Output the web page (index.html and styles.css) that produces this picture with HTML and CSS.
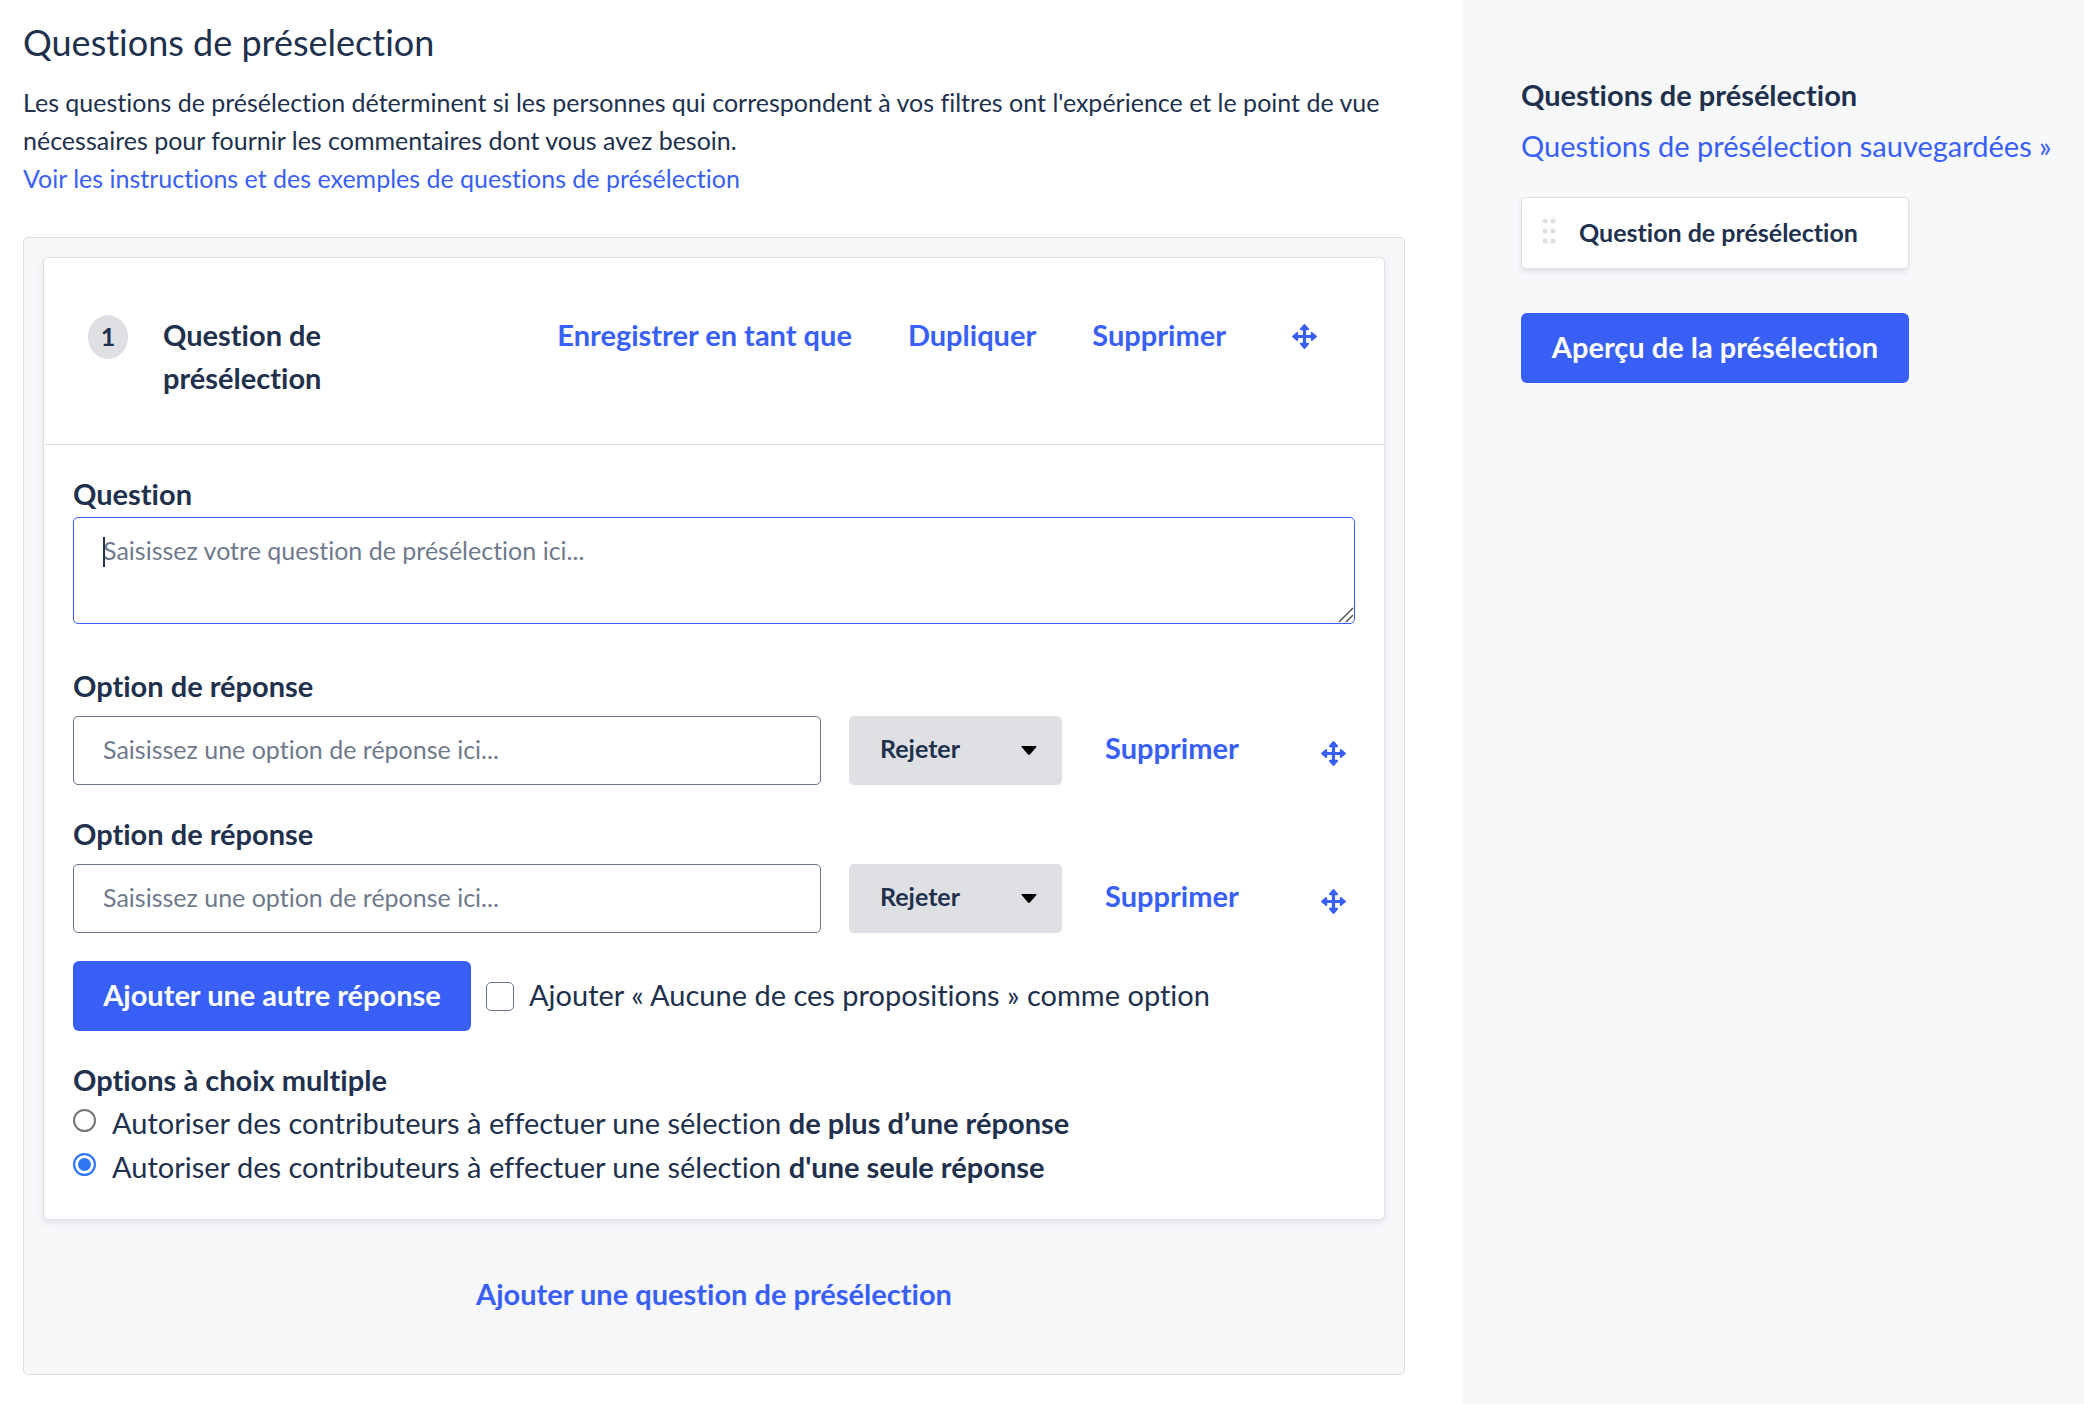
FILE: index.html
```html
<!DOCTYPE html>
<html lang="fr">

<head>
    <meta charset="UTF-8">
    <meta name="viewport" content="width=device-width, initial-scale=1.0">
    <title>Questions de préselection</title>
    <link rel="stylesheet" href="styles.css">
</head>

<body>
    <!-- shared icons -->
    <svg class="sprite" aria-hidden="true">
        <symbol id="icon-move" viewBox="0 0 25 25">
            <path d="M11.400 .7q1.100-1.200 2.200 0l3.200 3.900q.8 1.400-.8 1.600h-1.900v4.700h4.700V9q.2-1.600 1.600-.8l3.900 3.200q1.200 1.100 0 2.200l-3.900 3.200q-1.400.8-1.600-.8v-1.900h-4.700v4.700H16q1.600.2.8 1.600l-3.200 3.900q-1.100 1.200-2.200 0l-3.200-3.900q-.8-1.400.8-1.600h1.900v-4.700H6.200V16q-.2 1.600-1.600.8L.7 13.600q-1.200-1.100 0-2.200l3.900-3.200q1.400-.8 1.600.8v1.900h4.700V6.200H9q-1.600-.2-.8-1.600z" />
        </symbol>
        <symbol id="icon-caret" viewBox="0 0 16 9">
            <path d="M1 0h14q1 0 .4 1L9 8.400q-1 .9-2 0L.6 1Q0 0 1 0z" />
        </symbol>
    </svg>

    <div class="page">
        <main class="content">
            <h1>Questions de préselection</h1>
            <p class="intro">Les questions de présélection déterminent si les personnes qui correspondent à vos filtres ont l'expérience et le point de vue nécessaires pour fournir les commentaires dont vous avez besoin.</p>
            <a class="help-link" href="#">Voir les instructions et des exemples de questions de présélection</a>

            <div class="panel">
                <section class="card">
                    <header class="card-header">
                        <span class="number">1</span>
                        <h2>Question de présélection</h2>
                        <div class="actions">
                            <button type="button" class="link-button">Enregistrer en tant que</button>
                            <button type="button" class="link-button">Dupliquer</button>
                            <button type="button" class="link-button">Supprimer</button>
                            <button type="button" class="move" aria-label="Déplacer"><svg><use href="#icon-move" /></svg></button>
                        </div>
                    </header>

                    <form class="card-body">
                        <label class="label" for="question">Question</label>
                        <div class="question-field">
                            <textarea id="question" placeholder="Saisissez votre question de présélection ici..."></textarea>
                            <svg class="grip" viewBox="0 0 16 16">
                                <path d="M1 15 15 1M8 15l7-7" />
                            </svg>
                        </div>

                        <label class="label answer-label" for="answer-1">Option de réponse</label>
                        <div class="answer">
                            <input type="text" id="answer-1" placeholder="Saisissez une option de réponse ici...">
                            <div class="select">
                                <select aria-label="Action pour la réponse 1">
                                    <option>Rejeter</option>
                                </select>
                                <svg><use href="#icon-caret" /></svg>
                            </div>
                            <button type="button" class="link-button">Supprimer</button>
                            <button type="button" class="move" aria-label="Déplacer"><svg><use href="#icon-move" /></svg></button>
                        </div>

                        <label class="label answer-label" for="answer-2">Option de réponse</label>
                        <div class="answer">
                            <input type="text" id="answer-2" placeholder="Saisissez une option de réponse ici...">
                            <div class="select">
                                <select aria-label="Action pour la réponse 2">
                                    <option>Rejeter</option>
                                </select>
                                <svg><use href="#icon-caret" /></svg>
                            </div>
                            <button type="button" class="link-button">Supprimer</button>
                            <button type="button" class="move" aria-label="Déplacer"><svg><use href="#icon-move" /></svg></button>
                        </div>

                        <div class="add-row">
                            <button type="button" class="button">Ajouter une autre réponse</button>
                            <input type="checkbox" id="none">
                            <label for="none">Ajouter « Aucune de ces propositions » comme option</label>
                        </div>

                        <fieldset class="choices">
                            <legend class="label">Options à choix multiple</legend>
                            <div class="choice">
                                <input type="radio" name="choice" id="many">
                                <label for="many">Autoriser des contributeurs à effectuer une sélection <b>de plus d’une réponse</b></label>
                            </div>
                            <div class="choice">
                                <input type="radio" name="choice" id="single" checked>
                                <label for="single">Autoriser des contributeurs à effectuer une sélection <b>d'une seule réponse</b></label>
                            </div>
                        </fieldset>
                    </form>
                </section>

                <button type="button" class="link-button add-question">Ajouter une question de présélection</button>
            </div>
        </main>

        <aside class="sidebar">
            <h2>Questions de présélection</h2>
            <a href="#">Questions de présélection sauvegardées »</a>
            <div class="sidebar-tools">
                <div class="draggable">
                    <svg viewBox="0 0 14 26">
                        <circle cx="3" cy="3" r="2.500" />
                        <circle cx="11" cy="3" r="2.500" />
                        <circle cx="3" cy="13" r="2.500" />
                        <circle cx="11" cy="13" r="2.500" />
                        <circle cx="3" cy="23" r="2.500" />
                        <circle cx="11" cy="23" r="2.500" />
                    </svg>
                    Question de présélection
                </div>
                <button type="button" class="button">Aperçu de la présélection</button>
            </div>
        </aside>
    </div>
</body>

</html>
```
FILE: styles.css
```css
* {
    box-sizing: border-box;
}

body {
    margin: 0;
    background-color: #fff;
    color: #21314d;
    font-family: Lato, 'Open Sans', sans-serif;
    font-size: 29px;
    font-variant-ligatures: none;
    line-height: 43px;
}

button,
input,
select,
textarea {
    margin: 0;
    color: inherit;
    font: inherit;
    font-variant-ligatures: none;
}

button {
    cursor: pointer;
}

h1,
h2,
p {
    margin: 0;
}

a {
    color: #3960f6;
    text-decoration: none;
}

a:hover {
    text-decoration: underline;
}

.sprite {
    display: none;
}

.page {
    display: grid;
    grid-template-columns: minmax(0, 1fr) 621px;
    min-height: 100vh;
}

.content {
    padding: 21px 58px 29px 23px;
}

h1 {
    margin-bottom: 19px;
    font-size: 36px;
    font-weight: 400;
}

.intro,
.help-link {
    font-size: 25px;
    line-height: 38px;
}

.help-link {
    display: block;
}

/* question builder */

.panel {
    margin-top: 40px;
    padding: 19px 19px 59px;
    border: 1px solid #dfe0e4;
    border-radius: 5px;
    background-color: #f7f8fa;
    text-align: center;
}

.card {
    border: 1px solid #dfe0e4;
    border-radius: 5px;
    background-color: #fff;
    box-shadow: 0 3px 6px rgba(33, 49, 77, 0.1);
    text-align: left;
}

.card-header {
    display: flex;
    align-items: flex-start;
    padding: 55px 67px 45px 44px;
    border-bottom: 1px solid #dfe0e4;
}

.number {
    flex: none;
    width: 40px;
    height: 44px;
    margin-top: 2px;
    margin-right: 35px;
    border-radius: 50%;
    background-color: #dfe0e4;
    font-size: 25px;
    font-weight: 700;
    text-align: center;
}

h2 {
    font-size: 29px;
    font-weight: 700;
}

.card-header h2 {
    width: 240px;
}

.actions {
    display: flex;
    align-items: flex-start;
    gap: 56px;
    margin-left: auto;
}

.actions .move {
    height: 46px;
    margin-left: 10px;
}

.link-button {
    padding: 0;
    border: 0;
    background: none;
    color: #3960f6;
    font-weight: 700;
    text-align: left;
}

.move {
    display: flex;
    align-items: center;
    padding: 0;
    border: 0;
    background: none;
    cursor: move;
}

.move svg {
    width: 25px;
    height: 25px;
    fill: #3960f6;
}

.card-body {
    padding: 28px 29px 30px;
}

.label {
    display: block;
    padding: 0;
    font-weight: 700;
    line-height: 41px;
}

.question-field {
    position: relative;
    display: flex;
    margin-top: 3px;
}

textarea,
input[type="text"] {
    width: 100%;
    border: 1px solid #677489;
    border-radius: 5px;
    background-color: #fff;
    font-size: 25px;
    outline: none;
}

textarea {
    height: 107px;
    padding: 13px 29px;
    border-color: #3960f6;
    line-height: 38px;
    caret-color: transparent;
    resize: vertical;
}

textarea::-webkit-resizer {
    display: none;
}

.grip {
    position: absolute;
    right: 1px;
    bottom: 1px;
    width: 16px;
    height: 16px;
    fill: none;
    stroke: #555;
    stroke-width: 1.5;
    pointer-events: none;
}

/* text cursor of the active field */
.question-field::before {
    content: "";
    position: absolute;
    top: 20px;
    left: 30px;
    width: 2px;
    height: 30px;
    background-color: #21314d;
}

::placeholder {
    color: #6f7a8c;
    opacity: 1;
}

.answer-label {
    margin-top: 28px;
}

.question-field + .answer-label {
    margin-top: 41px;
}

.answer {
    display: grid;
    grid-template-columns: minmax(0, 1fr) 213px 203px 25px;
    align-items: center;
    gap: 28px;
    margin-top: 10px;
    padding-right: 9px;
}

input[type="text"] {
    height: 69px;
    padding: 0 29px 4px;
}

.answer .link-button {
    padding: 0 0 6px 15px;
}

.answer .move {
    padding-top: 6px;
}

.select {
    position: relative;
    display: flex;
}

.select select {
    width: 100%;
    height: 69px;
    padding: 0 31px 4px;
    border: 0;
    border-radius: 5px;
    background-color: #dfe0e4;
    font-size: 25px;
    font-weight: 700;
    appearance: none;
}

.select svg {
    position: absolute;
    top: 30px;
    right: 25px;
    width: 16px;
    height: 9px;
    pointer-events: none;
}

.button {
    height: 70px;
    padding: 0 20px 3px;
    border: 0;
    border-radius: 6px;
    background-color: #3960f6;
    color: #fff;
    font-weight: 700;
}

.add-row {
    display: flex;
    align-items: center;
    gap: 15px;
    margin-top: 28px;
}

.add-row .button {
    width: 398px;
}

.add-row label {
    padding-bottom: 3px;
}

input[type="checkbox"] {
    width: 28px;
    height: 29px;
    border: 1px solid #677489;
    border-radius: 5px;
    background-color: #fff;
    appearance: none;
}

input[type="checkbox"]:checked {
    background-color: #3960f6;
}

.choices {
    margin: 28px 0 0;
    padding: 0;
    border: 0;
}

.choice {
    display: flex;
    align-items: flex-start;
    gap: 16px;
    height: 44px;
}

.choices .label {
    margin-bottom: 1px;
}

input[type="radio"] {
    width: 23px;
    height: 23px;
    margin-top: 8px;
    border: 2px solid #767676;
    border-radius: 50%;
    background-color: #fff;
    appearance: none;
}

input[type="radio"]:checked {
    border-color: #2f77f5;
    background-color: #2f77f5;
    box-shadow: inset 0 0 0 3px #fff;
}

.add-question {
    margin-top: 52px;
}

/* sidebar */

.sidebar {
    padding: 73px 20px 40px 58px;
    background-color: #f7f8fa;
}

.sidebar a {
    display: block;
    margin-top: 8px;
}

.sidebar-tools {
    display: flex;
    flex-direction: column;
    gap: 44px;
    width: 388px;
    margin-top: 30px;
}

.draggable {
    display: flex;
    align-items: center;
    gap: 23px;
    height: 72px;
    padding: 0 20px 1px;
    border: 1px solid #dfe0e4;
    border-radius: 5px;
    background-color: #fff;
    box-shadow: 0 3px 5px rgba(33, 49, 77, 0.1);
    font-size: 25px;
    font-weight: 700;
    cursor: move;
}

.draggable svg {
    width: 14px;
    height: 26px;
    margin-bottom: 4px;
    fill: #dfe0e4;
}
```
